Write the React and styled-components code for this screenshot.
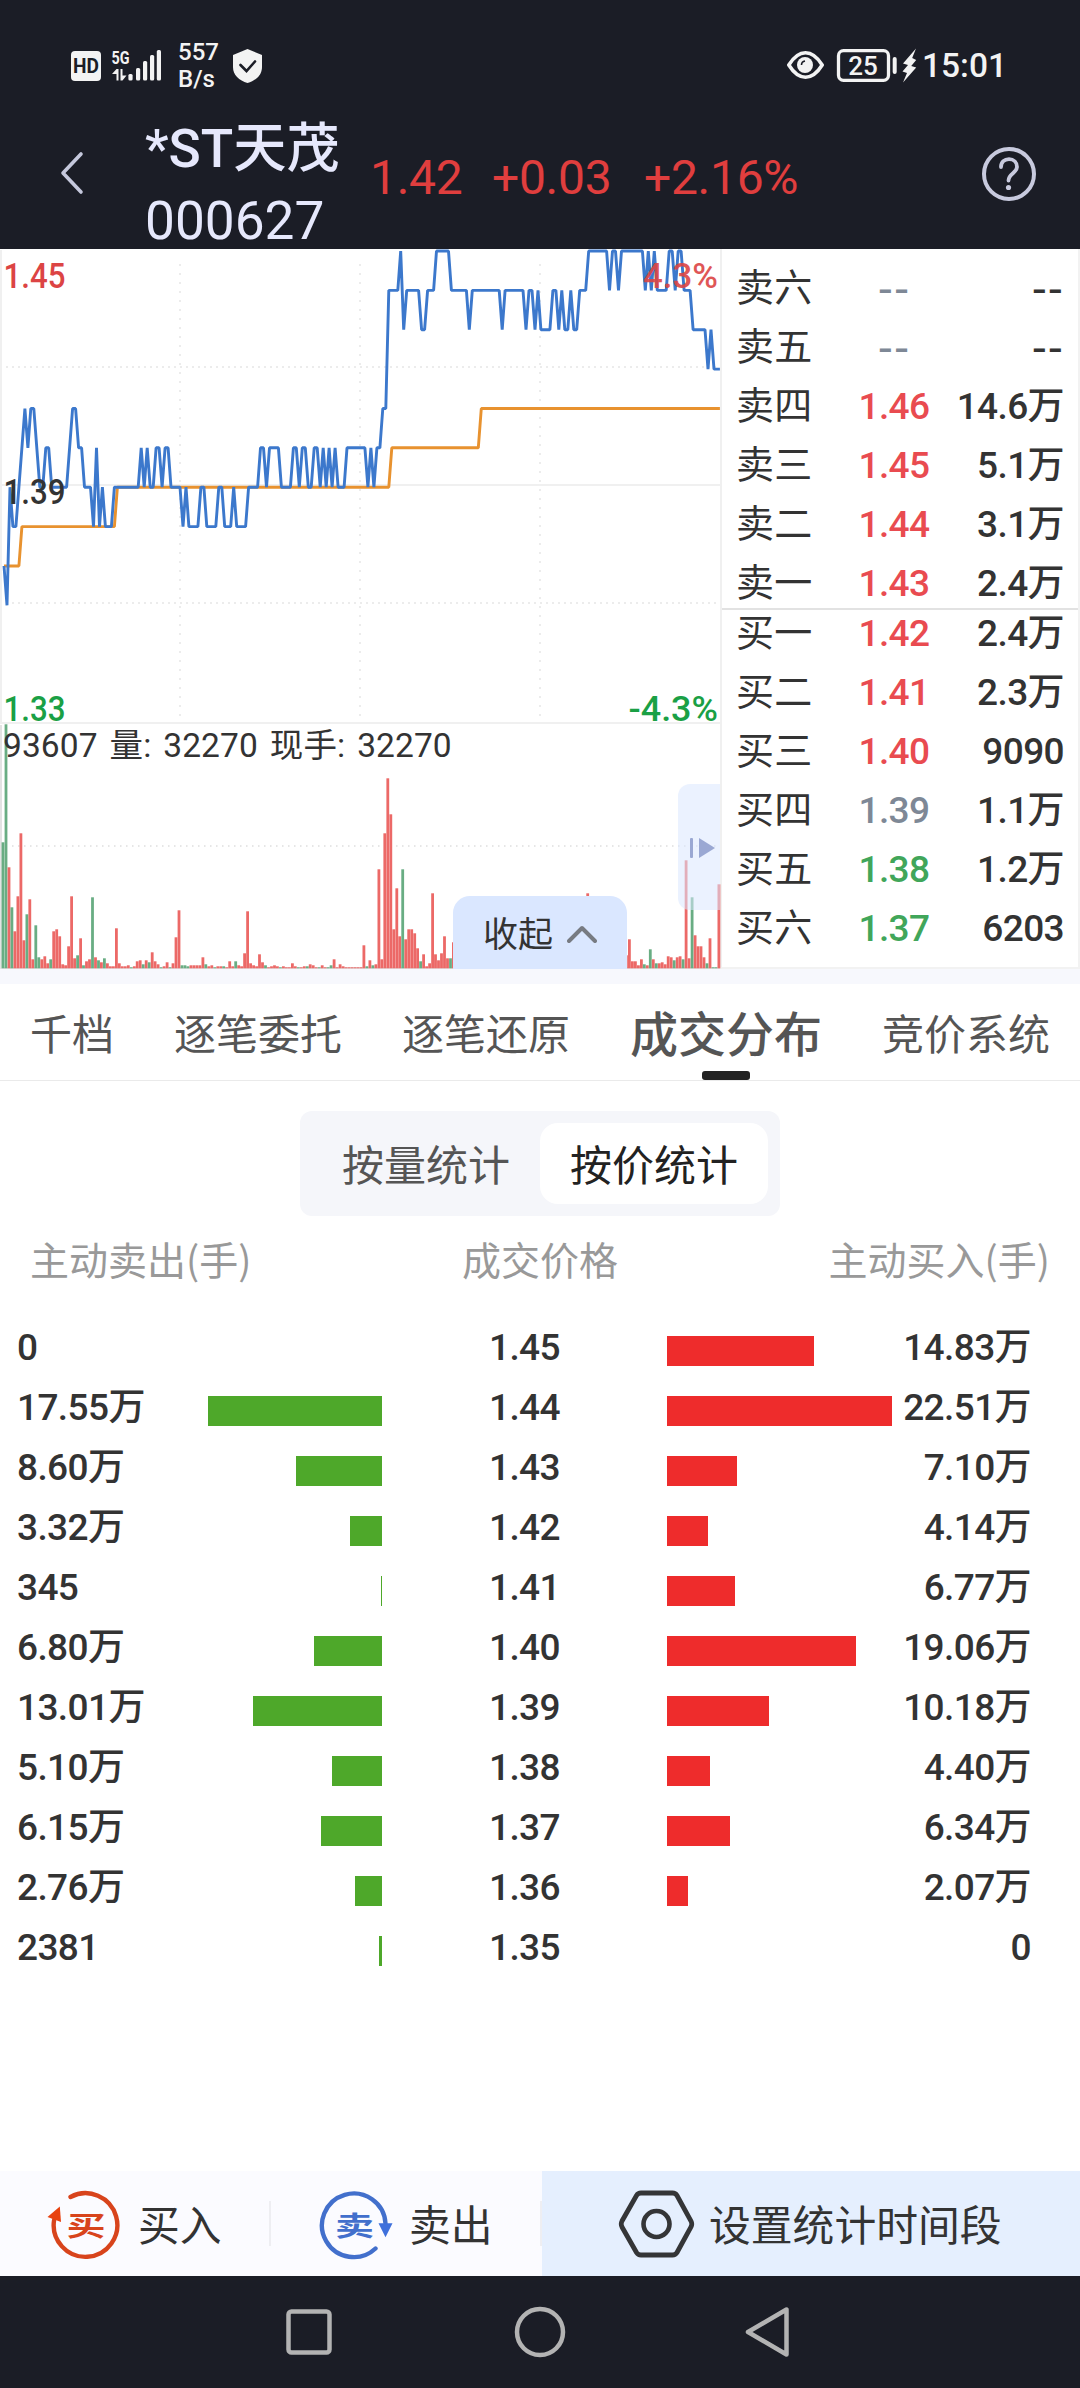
import React from 'react';
import styled, { createGlobalStyle } from 'styled-components';

const GlobalStyle = createGlobalStyle`
  * {
    box-sizing: border-box;
  }

  body {
    margin: 0;
    background: #fff;
    font-family: Roboto, 'Noto Sans CJK SC', sans-serif;
    color: #333;
  }

  svg {
    display: block;
    flex: none;
  }
`;

/* [first minute, price in cents], held until the next entry */
const PRICE_RUNS = [
  [0, 137], [1, 136], [2, 139], [3, 138], [5, 139], [6, 140], [7, 141], [8, 140],
  [9, 141], [11, 140], [12, 139], [14, 140], [16, 139], [22, 140], [23, 141],
  [25, 140], [27, 139], [30, 138], [31, 140], [32, 138], [33, 139], [34, 138],
  [37, 139], [46, 140], [47, 139], [48, 140], [49, 139], [51, 140], [53, 139],
  [54, 140], [56, 139], [60, 138], [61, 139], [62, 138], [66, 139], [68, 138],
  [72, 139], [74, 138], [77, 139], [78, 138], [82, 139], [86, 140], [88, 139],
  [89, 140], [93, 139], [97, 140], [99, 139], [100, 140], [102, 139], [104, 140],
  [106, 139], [107, 140], [108, 139], [109, 140], [110, 139], [111, 140],
  [112, 139], [115, 140], [122, 139], [123, 140], [124, 139], [125, 140],
  [127, 141], [129, 144], [133, 145], [134, 143], [135, 144], [140, 143],
  [142, 144], [145, 145], [150, 144], [156, 143], [157, 144], [167, 143],
  [168, 144], [175, 143], [176, 144], [178, 143], [179, 144], [180, 143],
  [184, 144], [186, 143], [187, 144], [188, 143], [190, 144], [191, 143],
  [193, 144], [196, 145], [203, 144], [204, 145], [206, 144], [207, 145],
  [215, 144], [216, 145], [217, 144], [218, 145], [219, 144], [223, 145],
  [225, 144], [226, 145], [228, 144], [231, 143], [236, 142], [237, 143],
  [238, 142],
];

const AVERAGE_RUNS = [[0, 137], [6, 138], [38, 139], [130, 140], [160, 141]];

/* one entry per minute, r = up, g = down, number = height in thirds of a pixel */
const VOLUME_AM =
  'g378 g732 r303 g183 r111 r216 r405 r84 g162 r207 r27 g129 g33 r27 r36 r15 g27 r111 r117 r96 r12 r9 r66 r216 r30 g39 r90 g9 r21 r27 ' +
  'g213 r33 g24 r18 g30 r15 r6 r6 r120 r15 r6 r6 r9 g3 r6 r21 r24 g12 r24 g18 r48 r21 r12 g3 r6 r18 g3 r15 r93 r174 ' +
  'g9 g9 g6 r9 r9 r9 r9 r33 g12 r6 r9 g3 r6 r6 g6 r3 r21 r6 g21 r9 r6 r45 r171 r15 r9 r6 r42 r18 g9 r3 ' +
  'r6 r9 r6 g3 r6 r3 r3 r15 r6 g3 r3 r6 g6 r12 r9 r3 g3 r9 r3 g3 g9 r27 r3 r12 r6 r3 r3 r3 r3 r3';
const VOLUME_PM =
  'r3 r69 g6 r24 g9 r12 r297 r27 r405 r570 r462 r117 r240 r96 g297 r87 r117 r117 r105 r60 g21 r42 r6 r15 r225 r42 r24 r45 r96 r30 g30 r78';
const VOLUME_CLOSE =
  'r39 r87 r21 r21 r9 r27 g12 r9 g57 r27 g15 r15 r18 r12 r36 r33 g24 r33 r36 g27 r324 r30 g213 r99 r66 r66 r33 g15 r90 g3 g3 r252';

const parseVolume = (start, text) =>
  text.split(' ').map((item, index) => ({
    minute: start + index,
    up: item[0] === 'r',
    height: Number(item.slice(1)) / 3,
  }));

const VOLUMES = [
  ...parseVolume(0, VOLUME_AM),
  ...parseVolume(120, VOLUME_PM),
  ...parseVolume(196, 'r225'),
  ...parseVolume(209, VOLUME_CLOSE),
];

const LAST_MINUTE = 240;
const minuteX = minute => 4 + minute * 2.983;
const priceY = cents => 2 + (145 - cents) * 39.37;

const toPoints = runs =>
  runs
    .map(([start, cents], index) => {
      const end = index + 1 < runs.length ? runs[index + 1][0] - 1 : LAST_MINUTE;
      const y = priceY(cents).toFixed(1);
      return `${minuteX(start).toFixed(1)},${y} ${minuteX(end).toFixed(1)},${y}`;
    })
    .join(' ');

const ASKS = [
  { label: '卖六', price: '--', amount: '--' },
  { label: '卖五', price: '--', amount: '--' },
  { label: '卖四', price: '1.46', amount: '14.6万', tone: 'up' },
  { label: '卖三', price: '1.45', amount: '5.1万', tone: 'up' },
  { label: '卖二', price: '1.44', amount: '3.1万', tone: 'up' },
  { label: '卖一', price: '1.43', amount: '2.4万', tone: 'up' },
];

const BIDS = [
  { label: '买一', price: '1.42', amount: '2.4万', tone: 'up' },
  { label: '买二', price: '1.41', amount: '2.3万', tone: 'up' },
  { label: '买三', price: '1.40', amount: '9090', tone: 'up' },
  { label: '买四', price: '1.39', amount: '1.1万' },
  { label: '买五', price: '1.38', amount: '1.2万', tone: 'down' },
  { label: '买六', price: '1.37', amount: '6203', tone: 'down' },
];

const TABS = ['千档', '逐笔委托', '逐笔还原', '成交分布', '竞价系统'];

const DISTRIBUTION = [
  { sell: '0', sold: 0, price: '1.45', bought: 147, buy: '14.83万' },
  { sell: '17.55万', sold: 174, price: '1.44', bought: 225, buy: '22.51万' },
  { sell: '8.60万', sold: 86, price: '1.43', bought: 70, buy: '7.10万' },
  { sell: '3.32万', sold: 32, price: '1.42', bought: 41, buy: '4.14万' },
  { sell: '345', sold: 1, price: '1.41', bought: 68, buy: '6.77万' },
  { sell: '6.80万', sold: 68, price: '1.40', bought: 189, buy: '19.06万' },
  { sell: '13.01万', sold: 129, price: '1.39', bought: 102, buy: '10.18万' },
  { sell: '5.10万', sold: 50, price: '1.38', bought: 43, buy: '4.40万' },
  { sell: '6.15万', sold: 61, price: '1.37', bought: 63, buy: '6.34万' },
  { sell: '2.76万', sold: 27, price: '1.36', bought: 21, buy: '2.07万' },
  { sell: '2381', sold: 3, price: '1.35', bought: 0, buy: '0' },
];

const TONES = { up: '#e94b50', down: '#41a65a' };

const Screen = styled.div`
  display: flex;
  flex-direction: column;
  width: 1080px;
  height: 2388px;
  overflow: hidden;
  background: #fff;
`;

const StatusBar = styled.div`
  display: flex;
  align-items: center;
  justify-content: space-between;
  height: 113px;
  padding: 18px 73px 0 71px;
  background: #1b1d26;
  color: #f3f3f3;
`;

const StatusGroup = styled.div`
  display: flex;
  align-items: center;
`;

const Speed = styled.div`
  width: 39px;
  margin: 0 16px 0 17px;
  font-size: 24px;
  font-weight: 500;
  line-height: 27px;
`;

const Clock = styled.div`
  margin-left: 5px;
  font-size: 33.5px;
  font-weight: 500;
  line-height: 34px;
`;

const Header = styled.header`
  display: flex;
  align-items: flex-start;
  height: 136px;
  padding-left: 60px;
  background: #1b1d26;
`;

const BackIcon = styled.svg`
  margin: 38px 61px 0 0;
`;

const StockName = styled.div`
  width: 225px;
  height: 136px;
  font-size: 53.2px;
  line-height: 72px;
  color: #e6e8fc;

  strong {
    display: block;
    font-weight: 500;
    white-space: nowrap;
  }
`;

const Quote = styled.div`
  display: flex;
  width: 611px;
  margin-top: 34px;
  font-size: 48px;
  line-height: 62px;
  letter-spacing: -0.3px;
  color: #e03e3e;
`;

const QuoteValue = styled.span`
  width: ${props => props.$width}px;
`;

const HelpIcon = styled.svg`
  margin-top: 33px;
`;

const Market = styled.section`
  display: flex;
  height: 720px;
`;

const ChartArea = styled.div`
  position: relative;
  width: 720px;
`;

const CollapseButton = styled.button`
  position: absolute;
  left: 453px;
  top: 647px;
  display: flex;
  align-items: center;
  justify-content: center;
  gap: 14px;
  width: 174px;
  height: 73px;
  padding: 2px 0 0;
  border: 0;
  border-radius: 17px 17px 0 0;
  background: #dae7ff;
  font-family: inherit;
  font-size: 35px;
  line-height: 50px;
  color: #333;

  span {
    padding-top: 5px;
  }
`;

const SideHandle = styled.div`
  position: absolute;
  left: 678px;
  top: 535px;
  display: flex;
  align-items: center;
  padding: 2px 0 0 12px;
  width: 42px;
  height: 126px;
  border-radius: 12px 0 0 12px;
  background: rgba(218, 231, 255, 0.55);
`;

const OrderBook = styled.div`
  width: 360px;
  overflow: hidden;
  border: solid #f2f2f2;
  border-width: 0 2px 2px;
`;

const Asks = styled.div`
  height: 361px;
  padding-top: 10px;
  border-bottom: 2px solid #e2e2e2;
`;

const Bids = styled.div`
  margin-top: -6px;
`;

const OrderRow = styled.div`
  display: grid;
  grid-template-columns: 113px 90px 1fr;
  align-items: center;
  height: 59px;
  padding: 0 14px;
  line-height: 59px;
`;

const OrderLabel = styled.span`
  font-size: 38px;
  letter-spacing: 0.3px;
`;

const Figure = styled.span`
  font-family: ${props =>
    props.$dash ? "'DejaVu Sans', sans-serif" : "Roboto, 'Noto Sans CJK SC', sans-serif"};
  font-size: ${props => (props.$dash ? 42 : 37)}px;
  font-weight: ${props => (props.$dash ? 400 : 500)};
  line-height: 58px;
  letter-spacing: ${props => (props.$dash ? 1 : -0.6)}px;
  text-align: ${props => props.$align || 'left'};
  color: ${props => props.$color || '#333'};
  white-space: nowrap;
`;

const Divider = styled.div`
  height: 15px;
  background: #f7f8fd;
`;

const Tabs = styled.nav`
  display: flex;
  gap: 60px;
  height: 97px;
  padding-left: 30px;
  border-bottom: 1px solid #eaeaea;
`;

const Tab = styled.div`
  display: flex;
  flex-direction: column;
  align-items: center;
  justify-content: space-between;
  font-size: ${props => (props.$active ? 48 : 42)}px;
  font-weight: ${props => (props.$active ? 500 : 400)};
  line-height: 62px;
  padding-top: 21px;
  color: #555;
  white-space: nowrap;

  &::after {
    content: '';
    width: 48px;
    height: 9px;
    border-radius: 3px;
    background: ${props => (props.$active ? '#222' : 'transparent')};
  }
`;

const Segment = styled.div`
  display: flex;
  align-self: center;
  width: 480px;
  height: 105px;
  margin-top: 30px;
  padding: 12px;
  border-radius: 12px;
  background: #f5f6fa;
`;

const SegmentItem = styled.div`
  flex: 1;
  padding-top: 3px;
  border-radius: 18px;
  background: ${props => (props.$active ? '#fff' : 'transparent')};
  font-size: 42px;
  line-height: 81px;
  text-align: center;
  color: ${props => (props.$active ? '#222' : '#555')};
`;

const ColumnTitles = styled.div`
  display: flex;
  justify-content: space-between;
  height: 85px;
  padding: 0 30px;
  font-family: 'Noto Sans CJK SC', sans-serif;
  font-size: 39px;
  line-height: 84px;
  color: #999;
`;

const Distribution = styled.div`
  flex: 1;
  padding-top: 17px;
`;

const DistributionRow = styled.div`
  display: grid;
  grid-template-columns: 190px 192px 285px 1fr;
  align-items: center;
  height: 60px;
  padding: 0 49px 0 0;
`;

const SellFigure = styled(Figure)`
  padding-left: 17px;
`;

const Bar = styled.div`
  height: 30px;
  margin-top: 5px;
  justify-self: ${props => (props.$side === 'sell' ? 'end' : 'start')};
  background: ${props => (props.$side === 'sell' ? '#4ea82a' : '#ee2c2c')};
`;

const BuyCell = styled.div`
  display: flex;
  align-items: center;
  justify-content: space-between;
`;

const BottomBar = styled.footer`
  display: flex;
  height: 105px;
  background: #fbfbff;
`;

const Action = styled.div`
  display: flex;
  align-items: center;
  width: ${props => props.$width}px;
  padding-left: ${props => props.$indent}px;
  background: ${props => props.$background || 'transparent'};
  font-size: 41.8px;
  line-height: 60px;
  white-space: nowrap;

  svg {
    margin-right: ${props => props.$gap}px;
  }

  span {
    padding-top: 6px;
  }
`;

const ActionSplit = styled.div`
  align-self: center;
  width: 2px;
  height: 45px;
  background: #eeeef2;
`;

const SystemNav = styled.div`
  display: flex;
  align-items: center;
  height: 112px;
  padding-left: 284px;
  background: #1b1d26;
`;

const NavIcon = styled.svg`
  margin-right: ${props => props.$gap}px;
  fill: none;
  stroke: #b3b3b3;
  stroke-width: 4.5;
  stroke-linejoin: round;
`;

function StatusIcons() {
  return (
    <svg width="90" height="50" viewBox="71 41 90 50" fill="#f3f3f3">
      <rect x="71" y="51" width="30" height="30" rx="4" />
      <text
        x="86"
        y="73.2"
        fill="#1b1d26"
        fontSize="20.5"
        fontWeight="700"
        textAnchor="middle"
        textLength="26"
        lengthAdjust="spacingAndGlyphs"
      >
        HD
      </text>
      <text x="111.5" y="63.5" fontSize="19" fontWeight="700" textLength="18" lengthAdjust="spacingAndGlyphs">
        5G
      </text>
      <path d="M116.5 69h2v11.500h-2v-6.500h-4.500zM120.500 69h2v6.500h4l-4 5h-2z" />
      <rect x="128.400" y="74" width="4.200" height="6.500" rx="1.500" />
      <rect x="136" y="68" width="4.200" height="12.500" rx="1.500" />
      <rect x="143" y="61" width="4.200" height="19.500" rx="1.500" />
      <rect x="150" y="55" width="4.200" height="25.500" rx="1.500" />
      <rect x="156.800" y="50" width="4.200" height="30.500" rx="1.500" />
    </svg>
  );
}

function BatteryIcons() {
  return (
    <svg width="130" height="36" viewBox="788 48 130 36" fill="none" stroke="#f3f3f3">
      <path
        d="M789.800 65c5-8 10.500-12.200 16.700-12.200s11.700 4.200 16.700 12.200c-5 8-10.500 12.200-16.700 12.200s-11.700-4.200-16.700-12.200z"
        strokeWidth="3.600"
        strokeLinejoin="round"
      />
      <circle cx="806" cy="65" r="8" fill="#f3f3f3" stroke="none" />
      <path d="M802.500 65c0-2.500 1-3.500 3.500-4" stroke="#1b1d26" strokeWidth="1.600" />
      <rect x="839.500" y="50.700" width="50" height="29.600" rx="5" strokeWidth="3.300" />
      <rect x="893.700" y="57" width="4" height="17" rx="2" fill="#f3f3f3" stroke="none" />
      <text x="864" y="74.500" fill="#f3f3f3" stroke="none" fontSize="26" fontWeight="500" textAnchor="middle">
        25
      </text>
      <path d="M917 48.500l-13 15 5 1.500-5.500 6.500 4.500 1.500-4 9.500 13.200-15-5-1.500 5-6-4-2z" fill="#f3f3f3" stroke="none" />
    </svg>
  );
}

function TimeChart() {
  return (
    <svg width="722" height="720" viewBox="0 0 722 720">
      <g stroke="#ececec" strokeWidth="2">
        <path d="M180 15v458M360 15v458M540 15v458" strokeDasharray="2 7" />
        <path d="M6 118h714M6 354h714" strokeDasharray="2 4" />
        <path d="M12 597h708" strokeDasharray="1.500 4.500" stroke="#e6e6e6" />
        <path d="M0 236h720M0 474h720M1 1v474M721 1v719" stroke="#f0f0f0" />
        <path d="M1 476v243M0 719h720" stroke="#e3e3e3" />
      </g>
      {VOLUMES.map(item => (
        <rect
          key={item.minute}
          x={(minuteX(item.minute) - 2.4).toFixed(1)}
          y={719.3 - item.height}
          width="2.8"
          height={item.height}
          fill={item.up ? '#ec6967' : '#69ad83'}
        />
      ))}
      <g fill="none" strokeWidth="2.9" strokeLinejoin="bevel">
        <polyline points={toPoints(AVERAGE_RUNS)} stroke="#e8922f" />
        <polyline points={toPoints(PRICE_RUNS)} stroke="#3c78cc" />
      </g>
      <g fontSize="35" fontWeight="500">
        <text x="3.500" y="38.500" fill="#dc4444" textLength="62" lengthAdjust="spacingAndGlyphs">1.45</text>
        <text x="3.500" y="255" fill="#333" textLength="62" lengthAdjust="spacingAndGlyphs">1.39</text>
        <text x="3.500" y="472" fill="#1aa045" textLength="62" lengthAdjust="spacingAndGlyphs">1.33</text>
        <text x="643" y="38.500" fill="#dc4444" textLength="75" lengthAdjust="spacingAndGlyphs" opacity="0.9">
          4.3%
        </text>
        <text x="628.500" y="472" fill="#1aa045" textLength="89.500" lengthAdjust="spacingAndGlyphs">
          -4.3%
        </text>
      </g>
      <text x="3" y="508" fill="#333" fontSize="33.500" letterSpacing="0.1" wordSpacing="3.500">
        93607 量: 32270 现手: 32270
      </text>
    </svg>
  );
}

function OrderLine({ label, price, amount, tone }) {
  const dash = price === '--';
  return (
    <OrderRow>
      <OrderLabel>{label}</OrderLabel>
      <Figure $dash={dash} $align="center" $color={TONES[tone] || '#7e8896'}>
        {price}
      </Figure>
      <Figure $dash={dash} $align="right">
        {amount}
      </Figure>
    </OrderRow>
  );
}

function BuyIcon() {
  return (
    <svg width="76" height="72" viewBox="46 2187 76 72">
      <path
        d="M70.500 2196a31.800 31.800 0 1 1-16.400 23"
        fill="none"
        stroke="#d8441c"
        strokeWidth="4.400"
        strokeLinecap="round"
      />
      <path d="M47.500 2216l12.300-10.500 1.200 15.500z" fill="#e8420f" />
      <text
        transform="translate(86 2234.500) scale(1.450 1)"
        textAnchor="middle"
        fontFamily="'Noto Sans CJK SC', sans-serif"
        fontSize="27"
        fontWeight="700"
        fill="#d8441c"
      >
        买
      </text>
    </svg>
  );
}

function SellIcon() {
  return (
    <svg width="76" height="72" viewBox="318 2187 76 72">
      <path
        d="M375.500 2247.500a31.800 31.800 0 1 1 10-25"
        fill="none"
        stroke="#426fcc"
        strokeWidth="4.400"
        strokeLinecap="round"
      />
      <path d="M378.500 2222.300h14l-7 14z" fill="#3f70dc" />
      <text
        transform="translate(354.500 2234.500) scale(1.450 1)"
        textAnchor="middle"
        fontFamily="'Noto Sans CJK SC', sans-serif"
        fontSize="27"
        fontWeight="700"
        fill="#426fcc"
      >
        卖
      </text>
    </svg>
  );
}

function App() {
  return (
    <>
      <GlobalStyle />
      <Screen>
        <StatusBar>
          <StatusGroup>
            <StatusIcons />
            <Speed>
              557
              <br />
              B/s
            </Speed>
            <svg width="29" height="34" viewBox="0 0 29 34">
              <path d="M14.500 0L29 6v12c0 8-6 13.500-14.500 16C6 31.500 0 26 0 18V6z" fill="#f3f3f3" />
              <path
                d="M7.500 16l6 6 8.500-9.500"
                fill="none"
                stroke="#1b1d26"
                strokeWidth="2.600"
                strokeLinecap="round"
              />
            </svg>
          </StatusGroup>
          <StatusGroup>
            <BatteryIcons />
            <Clock>15:01</Clock>
          </StatusGroup>
        </StatusBar>

        <Header>
          <BackIcon width="24" height="44" viewBox="0 0 24 44">
            <path
              d="M21 3L3 22l18 19"
              fill="none"
              stroke="#c5c8dc"
              strokeWidth="3.600"
              strokeLinecap="round"
              strokeLinejoin="round"
            />
          </BackIcon>
          <StockName>
            <strong>*ST天茂</strong>
            000627
          </StockName>
          <Quote>
            <QuoteValue $width={122}>1.42</QuoteValue>
            <QuoteValue $width={152}>+0.03</QuoteValue>
            <QuoteValue $width={180}>+2.16%</QuoteValue>
          </Quote>
          <HelpIcon width="56" height="56" viewBox="0 0 56 56" fill="none" stroke="#c8cade" strokeLinecap="round">
            <circle cx="28" cy="28" r="25" strokeWidth="4" />
            <path d="M20 21c0-5 3.500-7.800 8-7.800s8 3 8 7.800c0 6-8.500 6.500-8.500 13.500" strokeWidth="3.800" />
            <circle cx="27.500" cy="41.500" r="2.600" fill="#c8cade" stroke="none" />
          </HelpIcon>
        </Header>

        <Market>
          <ChartArea>
            <TimeChart />
            <SideHandle>
              <svg width="26" height="20" viewBox="0 0 26 20" fill="#9aa8d3">
                <rect width="3" height="20" rx="1" />
                <path d="M9 0l16 10L9 20z" />
              </svg>
            </SideHandle>
            <CollapseButton>
              <span>收起</span>
              <svg width="30" height="18" viewBox="0 0 30 18">
                <path
                  d="M2 16L15 3l13 13"
                  fill="none"
                  stroke="#777b82"
                  strokeWidth="4"
                  strokeLinecap="round"
                  strokeLinejoin="round"
                />
              </svg>
            </CollapseButton>
          </ChartArea>
          <OrderBook>
            <Asks>
              {ASKS.map(item => (
                <OrderLine key={item.label} {...item} />
              ))}
            </Asks>
            <Bids>
              {BIDS.map(item => (
                <OrderLine key={item.label} {...item} />
              ))}
            </Bids>
          </OrderBook>
        </Market>

        <Divider />

        <Tabs>
          {TABS.map(name => (
            <Tab key={name} $active={name === '成交分布'}>
              {name}
            </Tab>
          ))}
        </Tabs>

        <Segment>
          <SegmentItem>按量统计</SegmentItem>
          <SegmentItem $active>按价统计</SegmentItem>
        </Segment>

        <ColumnTitles>
          <span>主动卖出(手)</span>
          <span>成交价格</span>
          <span>主动买入(手)</span>
        </ColumnTitles>

        <Distribution>
          {DISTRIBUTION.map(row => (
            <DistributionRow key={row.price}>
              <SellFigure>{row.sell}</SellFigure>
              <Bar $side="sell" style={{ width: row.sold }} />
              <Figure $align="center">{row.price}</Figure>
              <BuyCell>
                <Bar $side="buy" style={{ width: row.bought }} />
                <Figure>{row.buy}</Figure>
              </BuyCell>
            </DistributionRow>
          ))}
        </Distribution>

        <BottomBar>
          <Action $width={269} $indent={46} $gap={16}>
            <BuyIcon />
            <span>买入</span>
          </Action>
          <ActionSplit />
          <Action $width={269} $indent={47} $gap={15}>
            <SellIcon />
            <span>卖出</span>
          </Action>
          <ActionSplit />
          <Action $width={538} $indent={76} $gap={14} $background="#e5effe">
            <svg width="77" height="70" viewBox="618 2188.500 77 70" fill="none" stroke="#343537">
              <path
                d="M641 2192.500h31.500q3 0 4.500 2.500l14 25.500q1.500 3 0 6l-14 25.500q-1.500 2.500-4.500 2.500h-31.500q-3 0-4.500-2.500l-14.500-25.500q-1.500-3 0-6l14.500-25.500q1.500-2.500 4.500-2.500z"
                strokeWidth="4.800"
              />
              <circle cx="656.500" cy="2223.500" r="13" strokeWidth="4.600" />
            </svg>
            <span>设置统计时间段</span>
          </Action>
        </BottomBar>

        <SystemNav>
          <NavIcon $gap={178} width="50" height="50" viewBox="0 0 50 50">
            <rect x="4.500" y="4.500" width="41" height="41" rx="3" />
          </NavIcon>
          <NavIcon $gap={179} width="54" height="54" viewBox="0 0 54 54">
            <circle cx="28" cy="27" r="23" />
          </NavIcon>
          <NavIcon $gap={0} width="46" height="54" viewBox="0 0 46 54">
            <path d="M41.500 4.500v45L3 27z" />
          </NavIcon>
        </SystemNav>
      </Screen>
    </>
  );
}

export default App;
